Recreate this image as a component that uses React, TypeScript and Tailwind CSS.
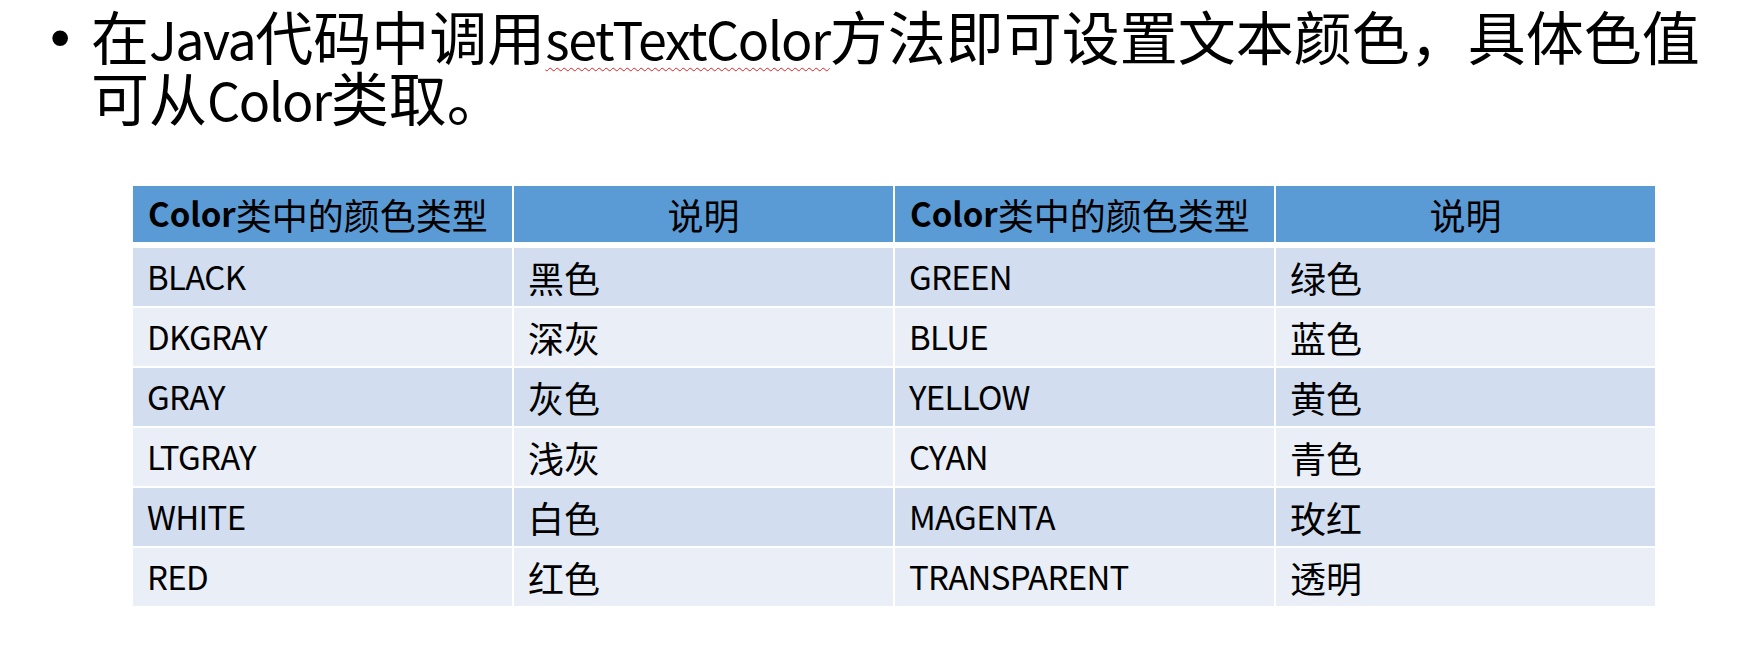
const rows = [
  ['BLACK', '黑色', 'GREEN', '绿色'],
  ['DKGRAY', '深灰', 'BLUE', '蓝色'],
  ['GRAY', '灰色', 'YELLOW', '黄色'],
  ['LTGRAY', '浅灰', 'CYAN', '青色'],
  ['WHITE', '白色', 'MAGENTA', '玫红'],
  ['RED', '红色', 'TRANSPARENT', '透明'],
];

// latin text in the slide is Calibri, which is narrower than the CJK font's latin
const Latin = ({ children }: { children: React.ReactNode }) => (
  <span className="text-[52px] leading-none tracking-[-1.5px]">{children}</span>
);

const App = () => {
  return (
    <div className="w-full h-[656px] bg-white overflow-hidden text-black font-['Noto_Sans_CJK_SC',sans-serif]">
      {/* Bullet line */}
      <div className="flex pt-[5px] pl-[50px]">
        <span className="w-[41px] mt-[1px] text-[58px] leading-[61px] font-['Liberation_Sans',sans-serif]">•</span>
        <p className="text-[58px] leading-[61px] whitespace-nowrap">
          在<Latin>Java</Latin>代码中调用
          <span className="underline decoration-wavy decoration-[#e02020] decoration-1 underline-offset-[7px]">
            <Latin>setTextColor</Latin>
          </span>
          方法即可设置文本颜色，具体色值
          <br />
          可从<Latin>Color</Latin>类取。
        </p>
      </div>

      {/* Color table */}
      <div className="ml-[133px] mt-[59px] w-[1522px]">
        <div className="grid grid-cols-4 gap-x-[2px] h-[56px] mb-[6px] text-[36px]">
          <div className="bg-[#5b9bd5] flex items-center pl-[15px]">
            <span className="font-bold text-[33px]">Color</span>类中的颜色类型
          </div>
          <div className="bg-[#5b9bd5] flex items-center justify-center">说明</div>
          <div className="bg-[#5b9bd5] flex items-center pl-[15px]">
            <span className="font-bold text-[33px]">Color</span>类中的颜色类型
          </div>
          <div className="bg-[#5b9bd5] flex items-center justify-center">说明</div>
        </div>

        <div className="flex flex-col gap-y-[2px]">
          {rows.map((row, i) => (
            <div key={row[0]} className="grid grid-cols-4 gap-x-[2px] h-[58px]">
              {row.map((cell, j) => (
                <div
                  key={cell}
                  className={
                    i % 2 === 0
                      ? 'bg-[#d2deef] flex items-center pl-[14px]'
                      : 'bg-[#eaeff7] flex items-center pl-[14px]'
                  }
                >
                  {j % 2 === 0 ? (
                    <span className="text-[33px] tracking-[-0.7px]">{cell}</span>
                  ) : (
                    <span className="text-[36px]">{cell}</span>
                  )}
                </div>
              ))}
            </div>
          ))}
        </div>
      </div>
    </div>
  );
};

export default App;
